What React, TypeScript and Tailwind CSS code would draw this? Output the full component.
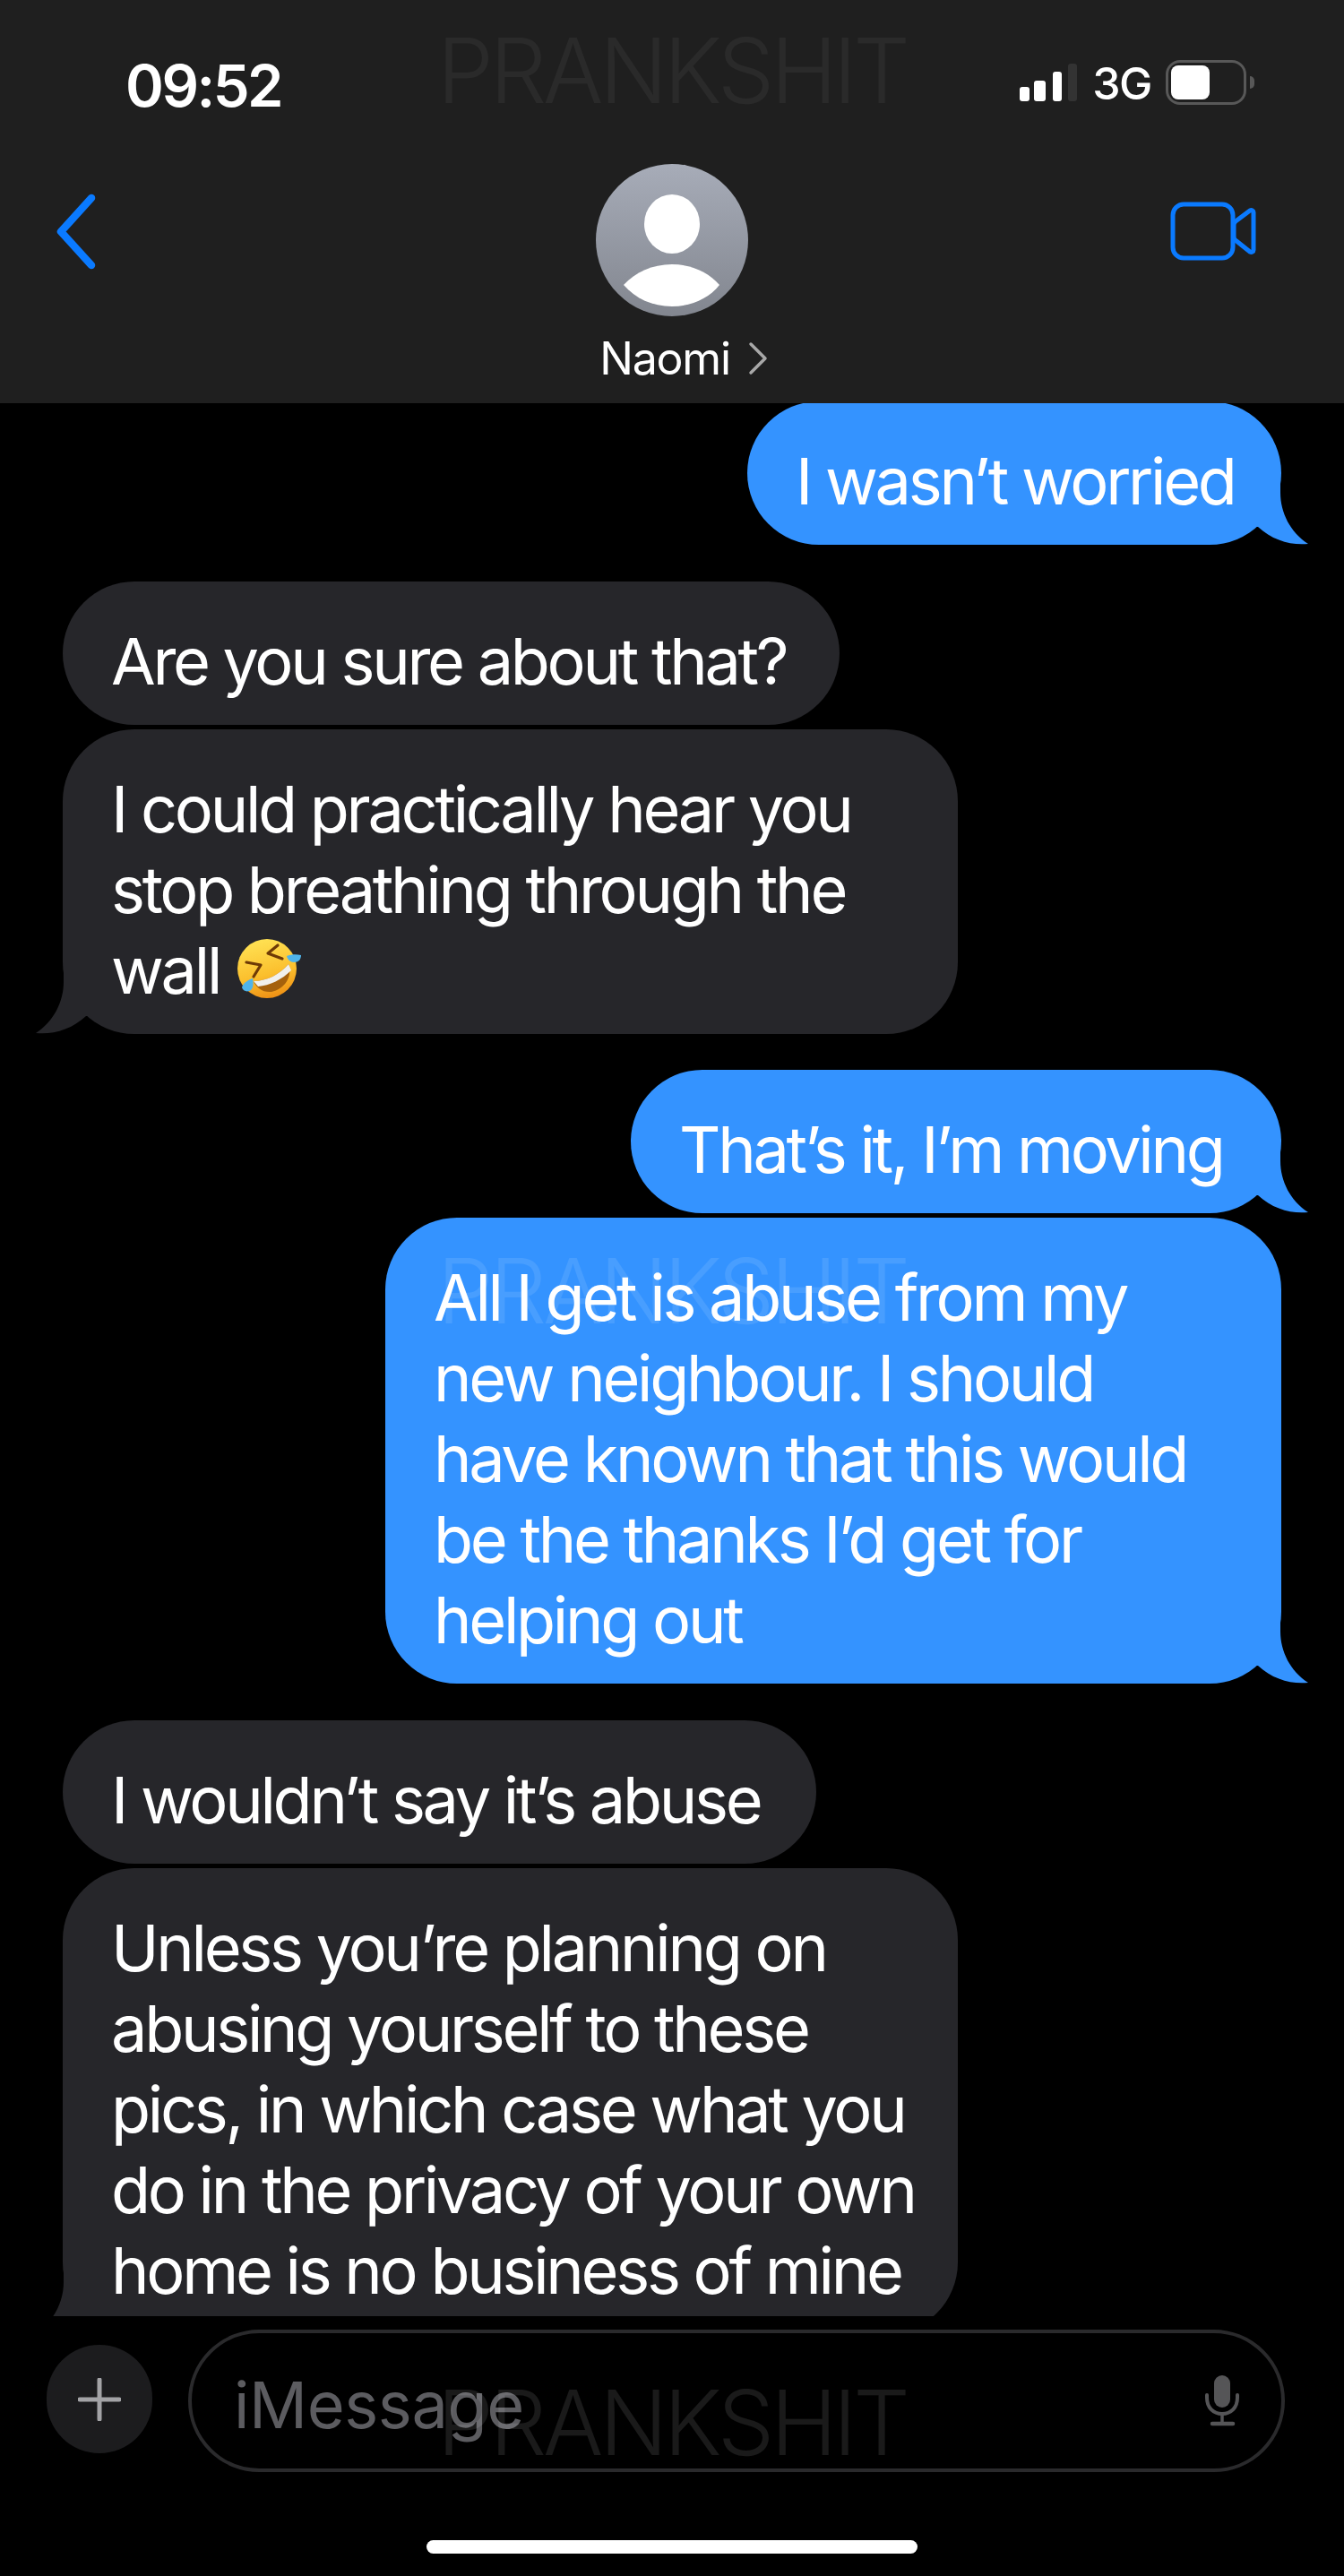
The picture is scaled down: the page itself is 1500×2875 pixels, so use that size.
const font = { fontFamily: "Inter, 'Noto Sans', sans-serif" };

type Msg = {
  lines: string[];
  side: "in" | "out";
  w: number;
  mt: string;
  tail?: boolean;
  emoji?: boolean;
};

const messages: Msg[] = [
  { lines: ["I wasn’t worried"], side: "out", w: 596, mt: "mt-[-2px]", tail: true },
  { lines: ["Are you sure about that?"], side: "in", w: 867, mt: "mt-[41px]" },
  {
    lines: ["I could practically hear you", "stop breathing through the", "wall"],
    side: "in",
    w: 999,
    mt: "mt-[5px]",
    tail: true,
    emoji: true,
  },
  { lines: ["That’s it, I’m moving"], side: "out", w: 726, mt: "mt-[40px]", tail: true },
  {
    lines: [
      "All I get is abuse from my",
      "new neighbour. I should",
      "have known that this would",
      "be the thanks I’d get for",
      "helping out",
    ],
    side: "out",
    w: 1000,
    mt: "mt-[5px]",
    tail: true,
  },
  { lines: ["I wouldn’t say it’s abuse"], side: "in", w: 841, mt: "mt-[41px]" },
  {
    lines: [
      "Unless you’re planning on",
      "abusing yourself to these",
      "pics, in which case what you",
      "do in the privacy of your own",
      "home is no business of mine",
    ],
    side: "in",
    w: 999,
    mt: "mt-[5px]",
    tail: true,
  },
];

function Tail({ side }: { side: "in" | "out" }) {
  if (side === "out") {
    return (
      <svg className="absolute right-[-31px] bottom-0 text-[#3493ff]" width="82" height="80" viewBox="0 0 82 80" fill="currentColor">
        <path d="M50 0V22C50 44 61 66 81 79C62 81 41 75 25 60H0V0Z" />
      </svg>
    );
  }
  return (
    <svg className="absolute left-[-31px] bottom-0 text-[#26262a]" width="82" height="80" viewBox="0 0 82 80" fill="currentColor">
      <path d="M32 0V22C32 44 21 66 1 79C20 81 41 75 57 60H82V0Z" />
    </svg>
  );
}

function RoflEmoji() {
  return (
    <svg className="mb-[4px] ml-[20px]" width="72" height="70" viewBox="0 0 72 70">
      <defs>
        <linearGradient id="rofl" x1="0.35" y1="0" x2="0.6" y2="1">
          <stop offset="0" stopColor="#ffe254" />
          <stop offset="0.6" stopColor="#fbbf2d" />
          <stop offset="1" stopColor="#ee8f14" />
        </linearGradient>
      </defs>
      <circle cx="33" cy="35" r="33" fill="url(#rofl)" />
      <path d="M45 9L34 18L50 24" fill="none" stroke="#6e3a06" strokeWidth="3.2" strokeLinecap="round" strokeLinejoin="round" />
      <path d="M10 28L26 31L18 44" fill="none" stroke="#6e3a06" strokeWidth="3.2" strokeLinecap="round" strokeLinejoin="round" />
      <path d="M18 49C33 49 48 41 57 30C62 45 52 58 38 61C28 62 21 56 18 49Z" fill="#a5610c" />
      <path d="M18 49C33 49 48 41 57 30L60 37C50 47 36 54 23 55Z" fill="#f1f0ec" />
      <path d="M55 21C60 19 66 19 71 20C71 25 68 28 63 28C59 28 56 25 55 21Z" fill="#4fb4ea" />
      <path d="M17 46C18 51 18 56 15 59C11 62 6 60 5 56C6 52 11 48 17 46Z" fill="#4fb4ea" />
    </svg>
  );
}

function Bubble({ m }: { m: Msg }) {
  const out = m.side === "out";
  return (
    <div
      style={{ width: m.w }}
      className={`relative rounded-[80px] pt-[44px] pb-[26px] pl-[54px] text-[72px] leading-[90px] tracking-[-3.3px] whitespace-nowrap text-white ${m.mt} ${
        out ? "ml-auto mr-[70px] bg-[#3493ff]" : "ml-[70px] bg-[#26262a]"
      }`}
    >
      {m.tail && <Tail side={m.side} />}
      {m.lines.map((line, i) => (
        <div key={i} className="relative flex items-center">
          {line}
          {m.emoji && i === m.lines.length - 1 && <RoflEmoji />}
        </div>
      ))}
    </div>
  );
}

function StatusBar() {
  return (
    <div className="flex h-[182px] items-start justify-between pt-[57px] pl-[140px] pr-[100px]">
      <span className="text-[65px] leading-[78px] font-semibold tracking-[-2.5px] text-white">09:52</span>
      <div className="flex items-center pt-[8px]">
        <svg width="64" height="42" viewBox="0 0 64 42">
          <rect x="0" y="26" width="11" height="16" rx="3" fill="#fff" />
          <rect x="16" y="19" width="13" height="23" rx="3" fill="#fff" />
          <rect x="37" y="9" width="10" height="33" rx="3" fill="#fff" />
          <rect x="54" y="0" width="10" height="42" rx="3" fill="#333" />
        </svg>
        <span className="ml-[17px] pt-[3px] text-[50px] leading-[50px] font-medium tracking-[-1.5px] text-white">3G</span>
        <div className="ml-[16px] flex h-[50px] w-[90px] rounded-[16px] border-[3px] border-[#585858] p-[3px]">
          <div className="h-full w-[43px] rounded-[8px] bg-white" />
        </div>
        <div className="ml-[4px] h-[14px] w-[5px] rounded-r-full bg-[#585858]" />
      </div>
    </div>
  );
}

function NavBar() {
  return (
    <div className="grid h-[268px] grid-cols-[1fr_auto_1fr] items-start pl-[58px] pr-[96px]">
      <svg className="mt-[34px]" width="52" height="85" viewBox="0 0 52 85" fill="none">
        <path d="M44 5L10 42.5L44 80" stroke="#0a7aff" strokeWidth="8.5" strokeLinecap="round" strokeLinejoin="round" />
      </svg>
      <div className="ml-[38px] flex flex-col items-center">
        <svg width="172" height="172" viewBox="0 0 172 172">
          <defs>
            <linearGradient id="avatar" x1="0" y1="0" x2="0" y2="1">
              <stop offset="0" stopColor="#a7acb8" />
              <stop offset="1" stopColor="#82868f" />
            </linearGradient>
          </defs>
          <circle cx="86" cy="86" r="85" fill="url(#avatar)" />
          <ellipse cx="86" cy="68" rx="31" ry="33" fill="#fff" />
          <path d="M32 136C45 122 64 113 86 113C108 113 127 122 139 136C127 151 108 160 86 160C64 160 45 151 32 136Z" fill="#fff" />
        </svg>
        <div className="mt-[17px] ml-[26px] flex items-center text-[50px] leading-[58px] tracking-[-1.2px] text-white">
          <span>Naomi</span>
          <svg className="ml-[20px]" width="22" height="38" viewBox="0 0 22 38" fill="none">
            <path d="M3 3L19 19L3 35" stroke="#a8a8a8" strokeWidth="3.5" strokeLinecap="round" strokeLinejoin="round" />
          </svg>
        </div>
      </div>
      <svg className="mt-[43px] justify-self-end" width="98" height="68" viewBox="0 0 98 68" fill="none">
        <rect x="3" y="3" width="67" height="60" rx="12" stroke="#0a7aff" strokeWidth="5" />
        <path d="M71 26C71 24 72 23 73 22L89 10C91 9 93 10 93 12V54C93 56 91 57 89 56L74 44C72 43 71 41 71 39Z" stroke="#0a7aff" strokeWidth="5" strokeLinejoin="round" />
      </svg>
    </div>
  );
}

function InputBar() {
  return (
    <div className="flex h-[290px] items-start pt-[15px] pl-[52px]">
      <div className="mt-[17px] flex h-[121px] w-[118px] items-center justify-center rounded-full bg-[#1c1c1e]">
        <svg width="48" height="48" viewBox="0 0 48 48" fill="none">
          <path d="M24 2V46M2 24H46" stroke="#a3a3a6" strokeWidth="5" strokeLinecap="round" />
        </svg>
      </div>
      <div className="ml-[40px] flex h-[159px] w-[1224px] items-center justify-between rounded-[80px] border-[4px] border-[#2a2a2c] pl-[47px] pr-[44px]">
        <span className="pt-[8px] text-[72px] leading-[90px] tracking-[-0.4px] text-[#5c5c60]">iMessage</span>
        <svg width="42" height="58" viewBox="0 0 42 58" fill="none">
          <rect x="11" y="0" width="18" height="36" rx="9" fill="#555557" />
          <path d="M3 22V25C3 36 10 43 20 43C30 43 37 36 37 25V22" stroke="#555557" strokeWidth="4" strokeLinecap="round" />
          <path d="M20 43V54" stroke="#555557" strokeWidth="3.5" />
          <path d="M9 54H32" stroke="#555557" strokeWidth="4.5" strokeLinecap="round" />
        </svg>
      </div>
    </div>
  );
}

function Watermark({ y, color }: { y: string; color: string }) {
  return (
    <div className={`pointer-events-none absolute left-[488px] text-[100px] leading-[120px] tracking-[-4.1px] font-light ${y} ${color}`}>
      PRANKSHIT
    </div>
  );
}

export default function App() {
  return (
    <div style={font} className="relative flex h-[2875px] w-[1500px] flex-col overflow-hidden bg-black">
      <header className="h-[450px] shrink-0 bg-[#1f1f1f]">
        <StatusBar />
        <NavBar />
      </header>
      <main className="h-[2135px] shrink-0 overflow-hidden">
        {messages.map((m, i) => (
          <Bubble key={i} m={m} />
        ))}
      </main>
      <InputBar />
      <div className="absolute bottom-[25px] left-[476px] h-[15px] w-[548px] rounded-full bg-white" />
      <Watermark y="top-[19px]" color="text-white/5" />
      <Watermark y="top-[1381px]" color="text-white/10" />
      <Watermark y="top-[2644px]" color="text-white/10" />
    </div>
  );
}
